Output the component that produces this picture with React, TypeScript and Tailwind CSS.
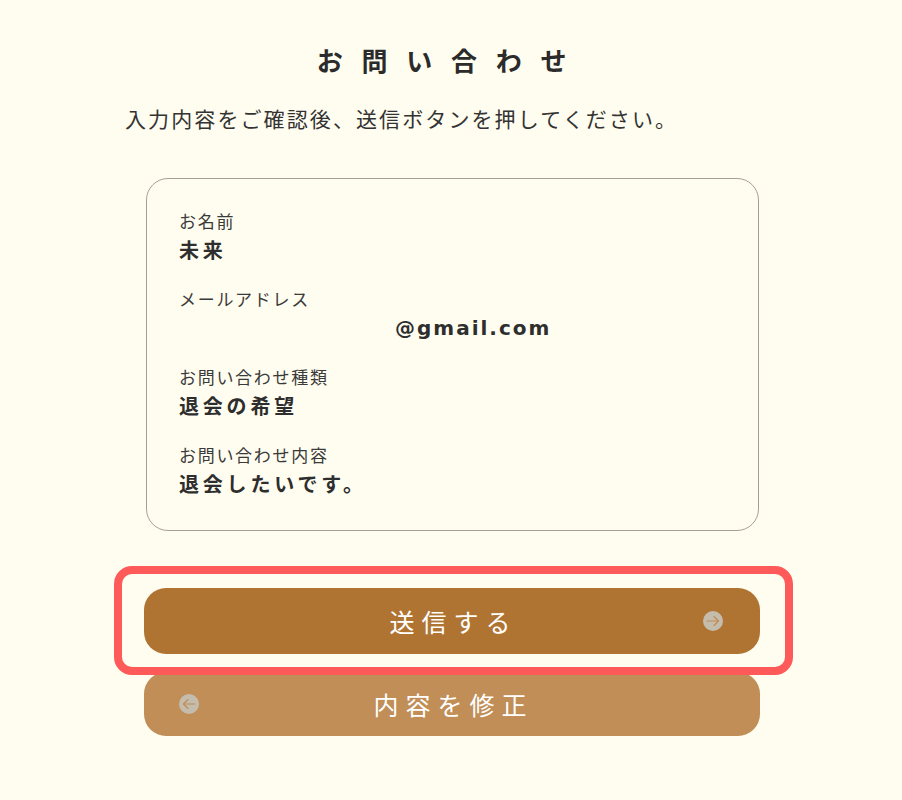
import React from "react";

const sans = { fontFamily: '"DejaVu Sans", "Noto Sans CJK JP", sans-serif' };
const jp = { fontFamily: '"Noto Sans CJK JP", sans-serif' };

function ArrowIcon({ dir }: { dir: "left" | "right" }) {
  return (
    <svg width="20" height="20" viewBox="0 0 20 20" className="block">
      <circle cx="10" cy="10" r="10" fill="#c4bdae" />
      {dir === "right" ? (
        <g fill="none" stroke="#c48a50" strokeWidth="1.1" strokeLinecap="round" strokeLinejoin="round">
          <line x1="4" y1="10" x2="15.5" y2="10" />
          <polyline points="11,5.5 15.5,10 11,14.5" />
        </g>
      ) : (
        <g fill="none" stroke="#c48a50" strokeWidth="1.1" strokeLinecap="round" strokeLinejoin="round">
          <line x1="16" y1="10" x2="4.5" y2="10" />
          <polyline points="9,5.5 4.5,10 9,14.5" />
        </g>
      )}
    </svg>
  );
}

function Item({ label, value, valueClass = "tracking-[0.19em]", valueStyle }: { label: string; value: string; valueClass?: string; valueStyle?: React.CSSProperties }) {
  return (
    <div className="flex flex-col">
      <div className="text-[17px] leading-[24px] tracking-[0.1em] text-[#3a3a3a]" style={jp}>
        {label}
      </div>
      <div
        className={"mt-[2px] text-[20px] leading-[30px] font-bold text-[#2e2e2e] " + valueClass}
        style={valueStyle ?? jp}
      >
        {value}
      </div>
    </div>
  );
}

export default function App() {
  return (
    <div className="min-h-[800px] w-full bg-[#fffdef] pt-[43px]" style={sans}>
      <h1
        className="text-center text-[26px] leading-[34px] font-bold tracking-[0.72em] text-[#2b2b2b]"
        style={jp}
      >
        お問い合わせ
      </h1>
      <p
        className="mx-auto mt-[26px] w-[652px] text-[21px] leading-[30px] tracking-[0.1em] text-[#333333]"
        style={jp}
      >
        入力内容をご確認後、送信ボタンを押してください。
      </p>

      <div className="ml-[144px] mt-[45px] w-[616px]">
        <div className="ml-[2px] w-[613px] rounded-[22px] border border-[#a99d9a] px-[32px] pt-[30px] pb-[31px]">
          <div className="flex flex-col gap-[22px]">
            <Item label="お名前" value="未来" />
            <Item
              label="メールアドレス"
              value="@gmail.com"
              valueClass="pl-[216px] tracking-[0.1em]"
              valueStyle={{ fontFamily: '"DejaVu Sans", sans-serif' }}
            />
            <Item label="お問い合わせ種類" value="退会の希望" />
            <Item label="お問い合わせ内容" value="退会したいです。" />
          </div>
        </div>

        <div className="relative mt-[57px]">
          <button
            type="button"
            className="grid h-[66px] w-full grid-cols-[20px_1fr_20px] items-center rounded-[22px] bg-[#b07432] px-[37px] text-white"
          >
            <span />
            <span className="pl-[0.12em] text-center text-[25px] leading-[34px] tracking-[0.28em]" style={jp}>
              送信する
            </span>
            <ArrowIcon dir="right" />
          </button>
          <div className="pointer-events-none absolute left-[-30px] right-[-33px] top-[-22px] bottom-[-21px] rounded-[18px] border-[8px] border-[#ff5a5a]" />
        </div>

        <button
          type="button"
          className="mt-[18px] grid h-[64px] w-full grid-cols-[20px_1fr_20px] items-center rounded-[22px] bg-[#c08e56] px-[35px] text-white"
        >
          <ArrowIcon dir="left" />
          <span className="pl-[0.12em] text-center text-[25px] leading-[34px] tracking-[0.28em]" style={jp}>
            内容を修正
          </span>
          <span />
        </button>
      </div>
    </div>
  );
}
